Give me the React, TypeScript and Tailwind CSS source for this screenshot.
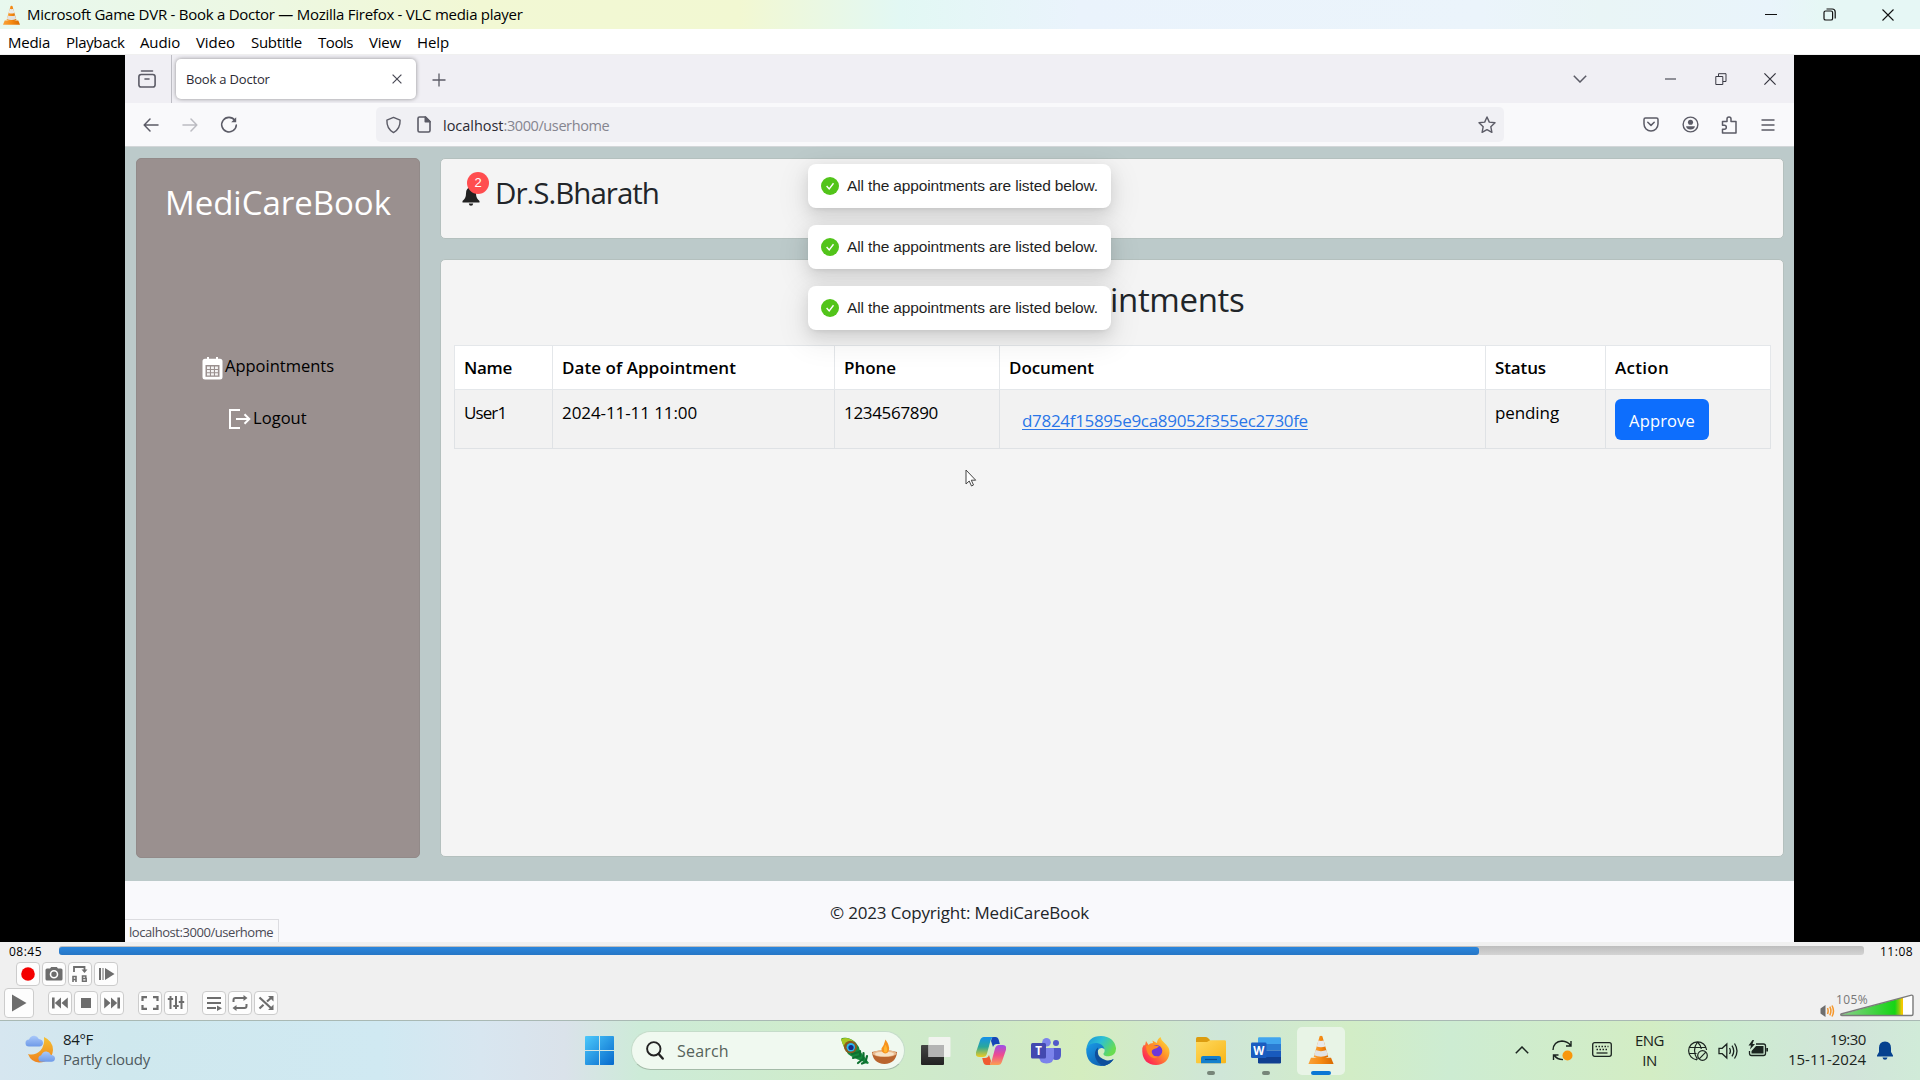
import type { ReactNode } from "react";

function Cone({ className }: { className: string }) {
  return (
    <svg viewBox="0 0 26 30" className={className}>
      <defs>
        <linearGradient id="cone" x1="0" x2="1">
          <stop offset="0" stopColor="#f9a23a" />
          <stop offset="0.5" stopColor="#f58a12" />
          <stop offset="1" stopColor="#d96a00" />
        </linearGradient>
      </defs>
      <path d="M2.6 23.5h20.8L26 30H0z" fill="url(#cone)" />
      <path d="M11.6 1.2Q13 .2 14.4 1.2L20.5 22.6Q13 26.5 5.5 22.6z" fill="url(#cone)" />
      <path d="M10.3 5.6q2.7 1 5.4 0l1.8 6.2q-4.5 1.6-9 0z" fill="#e9e9e9" />
      <path d="M7.4 15.6q5.6 2.2 11.2 0l1.5 5.4q-7.1 3-14.2 0z" fill="#e2e2e2" />
    </svg>
  );
}

function TitleBar() {
  return (
    <div className="flex h-[29px] shrink-0 items-center bg-[linear-gradient(90deg,#e8f8ee_0px,#ecf8e4_240px,#f2f8d4_480px,#f2f8d2_740px,#e2f8f4_900px,#eaf3fc_1080px,#ebf4fb_1480px,#e9f5f6_1600px,#e9f4fb_1770px,#e6f7f5_1820px)] pr-[26px] pl-[3px]">
      <Cone className="h-[20px] w-[17px]" />
      <span className="ml-[7px] text-[15px] leading-[29px] tracking-[-0.26px] text-black">
        Microsoft Game DVR - Book a Doctor — Mozilla Firefox - VLC media player
      </span>
      <div className="ml-auto flex items-center gap-[46px]">
        <svg viewBox="0 0 12 12" className="h-3 w-3"><path d="M0 5.5h12" stroke="#111" /></svg>
        <svg viewBox="0 0 13 13" className="h-[13px] w-[13px]" fill="none" stroke="#111" strokeWidth="1.2">
          <rect x="1" y="3" width="8.6" height="9" rx="1.6" />
          <path d="M3.5 1h5.7a3 3 0 0 1 3 3v6.5" />
        </svg>
        <svg viewBox="0 0 12 12" className="h-3 w-3"><path d="M.5 .5l11 11M11.500 .5l-11 11" stroke="#111" strokeWidth="1.1" /></svg>
      </div>
    </div>
  );
}

const menus: [string, string][] = [
  ["Media", "w-[58px] tracking-[-0.24px]"],
  ["Playback", "w-[74px] tracking-[-0.34px]"],
  ["Audio", "w-[56px] tracking-[-0.13px]"],
  ["Video", "w-[55px] tracking-[-0.07px]"],
  ["Subtitle", "w-[67px] tracking-[-0.29px]"],
  ["Tools", "w-[51px] tracking-[-0.45px]"],
  ["View", "w-[48px] tracking-[-0.19px]"],
  ["Help", "w-[48px] tracking-[-0.11px]"],
];

function MenuBar() {
  return (
    <div className="flex h-[26px] shrink-0 border-b border-[#f0f0f0] bg-white pl-[8px] text-[15px] leading-[27px] text-black">
      {menus.map(([t, c]) => (
        <span key={t} className={c}>{t}</span>
      ))}
    </div>
  );
}

function TabStrip() {
  return (
    <div className="flex h-[48px] shrink-0 items-center bg-[#f0eff4] text-[#5b5b66]">
      <div className="flex h-full w-[47px] items-center justify-center border-r border-[#bdbdc4] pr-[2px]">
        <svg viewBox="0 0 18 18" className="h-[18px] w-[18px]" fill="none" stroke="#5b5b66" strokeWidth="1.6" strokeLinecap="round">
          <path d="M3.500 1h11" />
          <rect x=".9" y="4.5" width="16.200" height="12.500" rx="2.300" />
          <path d="M7 9h4" />
        </svg>
      </div>
      <div className="ml-[4px] flex h-[40px] w-[240px] items-center rounded-[5px] bg-white pr-[14px] pl-[10px] shadow-[0_0_4px_rgba(0,0,0,0.4)]">
        <span className="pt-[2px] text-[13px] tracking-[-0.18px] text-[#2b2a33]">Book a Doctor</span>
        <svg viewBox="0 0 10 10" className="ml-auto h-[10px] w-[10px]"><path d="M.6 .6l8.800 8.800M9.400 .6L.6 9.400" stroke="#4a4a55" strokeWidth="1.2" /></svg>
      </div>
      <svg viewBox="0 0 14 14" className="mt-[2px] ml-[16px] h-[14px] w-[14px]"><path d="M7 .5v13M.5 7h13" stroke="#5b5b66" strokeWidth="1.3" /></svg>
      <div className="ml-auto flex items-center pr-[18px]">
        <svg viewBox="0 0 14 8" className="mr-[78px] h-2 w-[14px]" fill="none"><path d="M.8 .8L7 7l6.200-6.200" stroke="#5b5b66" strokeWidth="1.500" /></svg>
        <svg viewBox="0 0 11 11" className="mr-[39px] h-[11px] w-[11px]"><path d="M0 5h11" stroke="#777780" strokeWidth="1.600" /></svg>
        <svg viewBox="0 0 12 12" className="mr-[37px] h-3 w-3" fill="none" stroke="#3a3a44"><path d="M.8 3.500h7v8h-7zM3.500 3.500V.700h7.500v7.800H8" /></svg>
        <svg viewBox="0 0 12 12" className="h-3 w-3"><path d="M.4 .4l11.200 11.200M11.600 .4L.4 11.600" stroke="#33333d" strokeWidth="1.200" /></svg>
      </div>
    </div>
  );
}

function NavBar() {
  return (
    <div className="flex h-[43px] shrink-0 items-center bg-[#f9f9fb] pr-[19px]">
      <svg viewBox="0 0 16 14" className="ml-[18px] h-[14px] w-[16px]" fill="none" stroke="#5b5b66" strokeWidth="1.500" strokeLinecap="round" strokeLinejoin="round"><path d="M15 7H1.500M7 1L1.200 7 7 13" /></svg>
      <svg viewBox="0 0 16 14" className="ml-[23px] h-[14px] w-[16px]" fill="none" stroke="#bcbcc2" strokeWidth="1.500" strokeLinecap="round" strokeLinejoin="round"><path d="M1 7h13.500M9 1l5.800 6L9 13" /></svg>
      <svg viewBox="0 0 18 18" className="ml-[22px] h-[18px] w-[18px]" fill="none" stroke="#5b5b66" strokeWidth="1.600" strokeLinecap="round"><path d="M14.800 4.200A7.300 7.300 0 1 0 16.300 9" /><path d="M16.200 1.300v5h-5z" fill="#5b5b66" stroke="none" /></svg>
      <div className="ml-[138px] flex h-[35px] w-[1128px] items-center rounded-[5px] bg-[#f0f0f4] pr-[8px] pl-[9px]">
        <svg viewBox="0 0 18 18" className="h-[18px] w-[17px]" fill="none" stroke="#5b5b66" strokeWidth="1.500" strokeLinejoin="round"><path d="M9 1l7 2.800C16.200 9.500 14 14.500 9 17 4 14.500 1.800 9.500 2 3.800z" /></svg>
        <svg viewBox="0 0 14 17" className="ml-[15px] h-[17px] w-[14px]" fill="none" stroke="#5b5b66" strokeWidth="1.600" strokeLinejoin="round"><path d="M2.500 1H8.500L13 5.500V14.500Q13 16 11.500 16H2.500Q1 16 1 14.500V2.500Q1 1 2.500 1z" /><path d="M8.300 1v4.800H13z" fill="#5b5b66" /></svg>
        <span className="ml-[12px] pt-[2px] text-[14.500px] tracking-[-0.03px] text-[#2b2a33]">localhost</span>
        <span className="pt-[2px] text-[14.500px] tracking-[-0.400px] text-[#85858f]">:3000/userhome</span>
        <svg viewBox="0 0 18 18" className="ml-auto h-[18px] w-[18px]" fill="none" stroke="#5b5b66" strokeWidth="1.400" strokeLinejoin="round"><path d="M9 1l2.300 5.100 5.700.7-4.200 3.900 1.100 5.600L9 13.600l-4.900 2.700 1.100-5.600L1 6.800l5.700-.7z" /></svg>
      </div>
      <div className="ml-auto flex items-center text-[#5b5b66]">
        <svg viewBox="0 0 16 15" className="mr-[23px] h-[15px] w-[16px]" fill="none" stroke="currentColor" strokeWidth="1.500" strokeLinecap="round" strokeLinejoin="round"><path d="M2.500 1h11Q15 1 15 2.500V7A7 7 0 0 1 1 7V2.500Q1 1 2.500 1zM4.800 5.300L8 8.400l3.200-3.100" /></svg>
        <svg viewBox="0 0 18 18" className="mr-[22px] h-[17px] w-[17px]"><circle cx="9" cy="9" r="7.800" fill="none" stroke="currentColor" strokeWidth="1.500" /><circle cx="9" cy="6.600" r="2.700" fill="currentColor" /><path d="M4.300 10.800h9.400Q13 14.200 9 14.200T4.300 10.800z" fill="currentColor" /></svg>
        <svg viewBox="0 0 16 18" className="mr-[24px] h-[18px] w-[16px]" fill="none" stroke="currentColor" strokeWidth="1.500" strokeLinejoin="round"><path d="M1.500 5.500H6V3a2 2 0 0 1 4 0v2.500h5V17H1.500V13.200H3.300a2 2 0 0 0 0-4H1.500z" /></svg>
        <svg viewBox="0 0 14 12" className="h-3 w-[14px]" stroke="currentColor" strokeWidth="1.400"><path d="M.5 1h13M.5 6h13M.5 11h13" /></svg>
      </div>
    </div>
  );
}

function Sidebar() {
  return (
    <aside className="flex w-[284px] shrink-0 flex-col rounded-[5px] border border-[#928a89] bg-[#9a908f] text-[16.500px] leading-[24px] text-black">
      <h1 className="mt-[20px] ml-[28px] text-[33px] leading-[48px] tracking-[-0.020px] text-white">MediCareBook</h1>
      <div className="mt-[127px] ml-[65px] flex h-[24px] items-center">
        <svg viewBox="0 0 21 23" className="mt-[4px] h-[23px] w-[21px]">
          <path d="M3 1.800h2V0h2v1.800h7V0h2v1.800h2q2.500 0 2.500 2.500V20q0 2.500-2.500 2.500H3Q.5 22.500 .5 20V4.300q0-2.500 2.500-2.500z" fill="#fff" />
          <path d="M3.500 8h14v11.800h-14z" fill="#9a908f" />
          <path d="M5 9.600h2.900v2.300H5zM9 9.600h2.900v2.300H9zM13 9.600h2.900v2.300H13zM5 12.900h2.900v2.300H5zM9 12.900h2.900v2.300H9zM13 12.900h2.900v2.300H13zM5 16.200h2.900v2.300H5zM9 16.200h2.900v2.300H9zM13 16.200h2.900v2.300H13z" fill="#fff" opacity=".9" />
        </svg>
        <span className="ml-[2px]">Appointments</span>
      </div>
      <div className="mt-[28px] ml-[92px] flex h-[24px] items-center">
        <svg viewBox="0 0 22 20" className="mt-[2px] h-5 w-[22px]" fill="none" stroke="#fff" strokeWidth="2"><path d="M11 1H1v18h10M7 10h13M15.500 5.200L20.300 10l-4.800 4.800" /></svg>
        <span className="ml-[2px] tracking-[0.05px]">Logout</span>
      </div>
    </aside>
  );
}

const columns: [string, string][] = [
  ["Name", "w-[98px] tracking-[-0.3px]"],
  ["Date of Appointment", "w-[282px] tracking-[0.06px]"],
  ["Phone", "w-[165px] tracking-[-0.04px]"],
  ["Document", "w-[486px] tracking-[-0.08px]"],
  ["Status", "w-[120px] tracking-[-0.12px]"],
  ["Action", "w-[165px] tracking-[0.28px]"],
];

function Cell({ children, className }: { children: ReactNode; className: string }) {
  return <td className={`border border-[#dfe2e5] p-0 pl-[9px] align-top ${className}`}>{children}</td>;
}

function Appointments() {
  return (
    <section className="mt-[20px] flex h-[598px] flex-col rounded-[5px] border border-[#b4c0be] bg-[#f4f4f4] px-[13px] pt-[16px]">
      <h2 className="pl-[6px] text-center text-[33px] leading-[48px] tracking-[-0.350px] text-[#212529]">All Appointments</h2>
      <table className="mt-[21px] w-[1316px] table-fixed border-collapse text-[17px] leading-[24px] text-black">
        <thead>
          <tr className="h-[44px] bg-white text-left">
            {columns.map(([t, c]) => (
              <th key={t} className={`border border-[#e4e7ea] p-0 pl-[9px] font-semibold ${c}`}>{t}</th>
            ))}
          </tr>
        </thead>
        <tbody>
          <tr className="h-[59px] bg-[#f2f2f2]">
            <Cell className="pt-[11px] tracking-[-0.900px]">User1</Cell>
            <Cell className="pt-[11px] tracking-[-0.090px]">2024-11-11 11:00</Cell>
            <Cell className="pt-[11px] tracking-[-0.320px]">1234567890</Cell>
            <Cell className="pt-[19px]">
              <span className="ml-[13px] tracking-[-0.310px] text-[#2a76e8] underline decoration-1 underline-offset-[2px]">d7824f15895e9ca89052f355ec2730fe</span>
            </Cell>
            <Cell className="pt-[11px] tracking-[-0.100px]">pending</Cell>
            <Cell className="pt-[9px]">
              <button className="h-[41px] w-[94px] rounded-[6px] bg-[#0d6efd] pt-px text-[16.500px] leading-[41px] tracking-[0.150px] text-white">Approve</button>
            </Cell>
          </tr>
        </tbody>
      </table>
    </section>
  );
}

function Header() {
  return (
    <header className="flex h-[81px] items-start rounded-[5px] border border-[#b4c0be] bg-[#f4f4f4] pl-[21px]">
      <div className="relative mt-[27px] h-[22px] w-[19px]">
        <svg viewBox="0 0 18 20" className="h-5 w-[18px]"><path d="M9 1Q14 1.500 14 7.500 14 12.500 17.500 15v1.500H.5V15Q4 12.500 4 7.500 4 1.500 9 1zM6.800 17.600h4.400Q11 19.800 9 19.800T6.800 17.600z" fill="#212121" /></svg>
        <span className="absolute -top-[14px] left-[5px] h-[22px] w-[22px] rounded-full bg-[#ff4d4f] text-center font-['Liberation_Sans'] text-[13px] leading-[22px] text-white">2</span>
      </div>
      <span className="mt-[11px] ml-[14px] text-[29.500px] leading-[46px] tracking-[-0.980px] text-[#212529]">Dr.S.Bharath</span>
    </header>
  );
}

function Toast() {
  return (
    <div className="flex h-[44px] w-[303px] items-center rounded-[8px] bg-white pl-[13px] shadow-[0_6px_16px_rgba(0,0,0,0.1),0_3px_6px_-4px_rgba(0,0,0,0.14),0_9px_28px_8px_rgba(0,0,0,0.06)]">
      <svg viewBox="0 0 18 18" className="h-[18px] w-[18px]"><circle cx="9" cy="9" r="9" fill="#52c41a" /><path d="M5.600 9l2.600 2.900 4.300-5.600" fill="none" stroke="#fff" strokeWidth="1.400" /></svg>
      <span className="ml-[8px] font-['Liberation_Sans'] text-[15.500px] tracking-[-0.130px] whitespace-nowrap text-[#1f1f1f]">All the appointments are listed below.</span>
    </div>
  );
}

function Page() {
  return (
    <div className="relative flex h-[796px] flex-col border-t border-[#d2d6d8] bg-[#bccaca]">
      <div className="flex h-[734px] pt-[11px] pb-[23px] pl-[11px]">
        <Sidebar />
        <main className="ml-[20px] w-[1344px]">
          <Header />
          <Appointments />
        </main>
      </div>
      <footer className="flex h-[61px] items-center justify-center bg-[#f9f9fc] pt-[2px] text-[17px] tracking-[-0.170px] text-[#212529]">
        © 2023 Copyright: MediCareBook
      </footer>
      <div className="absolute top-[17px] left-[683px] flex flex-col gap-[17px]">
        <Toast />
        <Toast />
        <Toast />
      </div>
      <svg viewBox="0 0 12 18" className="absolute top-[322px] left-[840px] h-[18px] w-3"><path d="M1 1v14l3.200-3 2.300 5 2-1-2.200-4.800h4.400z" fill="#fff" stroke="#444" /></svg>
      <div className="absolute bottom-0 left-0 h-[23px] w-[154px] border-t border-r border-[#dcdce0] bg-[#f9f9fb] pl-[4px] text-[13px] leading-[24px] tracking-[-0.440px] text-[#4a4a55]">
        localhost:3000/userhome
      </div>
    </div>
  );
}

function CtlButton({ children, className }: { children: ReactNode; className: string }) {
  return (
    <div className={`flex h-6 w-6 items-center justify-center rounded-[4px] border border-[#cccccc] bg-[#fdfdfd] ${className}`}>
      <svg viewBox="0 0 18 18" className="h-[18px] w-[18px] shrink-0" fill="#6d6d6d">{children}</svg>
    </div>
  );
}

function Controls() {
  return (
    <div className="flex h-[78px] shrink-0 flex-col bg-[#f0f0f0]">
      <div className="flex h-[20px] items-start pt-[4px] pl-[9px] text-[12px] text-black">
        <span className="-mt-[3px] w-[50px] leading-[18px] tracking-[0.480px]">08:45</span>
        <div className="h-[9px] w-[1805px] rounded-[3px] bg-[linear-gradient(#bdbdbd,#d4d4d4)] pt-px">
          <div className="h-[8px] w-[1420px] rounded-[3px] bg-[linear-gradient(#2a86dc,#2676c6)]" />
        </div>
        <span className="-mt-[3px] ml-[16px] leading-[18px] tracking-[0.500px]">11:08</span>
      </div>
      <div className="flex h-[24px] gap-[2px] pl-[16px]">
        <CtlButton className=""><circle cx="9" cy="9" r="6.800" fill="#f40000" /></CtlButton>
        <CtlButton className="">
          <path d="M.5 5q0-1.500 1.500-1.500h3L6.200 2h5.600L13 3.500h3q1.500 0 1.500 1.500v9q0 1.500-1.500 1.500H2Q.5 15.500 .5 14z" />
          <circle cx="9" cy="9.300" r="3.500" fill="none" stroke="#fff" strokeWidth="1.600" />
        </CtlButton>
        <CtlButton className="">
          <path d="M3 7V2h10.500v3" fill="none" stroke="#6d6d6d" strokeWidth="1.800" />
          <path d="M10.500 4.500h6l-3 3.500z" />
          <path d="M2 17v-5.500h3V17M2 14.500h3" fill="none" stroke="#6d6d6d" strokeWidth="1.600" />
          <path d="M11.500 11h3.300v2.600h-3.300v2.600h3.700v-2.600h-3.700zV16" fill="none" stroke="#6d6d6d" strokeWidth="1.500" />
        </CtlButton>
        <CtlButton className=""><path d="M2 3h2v12H2zM5.500 3h1v12h-1zM8 3l9.500 6L8 15z" /></CtlButton>
      </div>
      <div className="flex h-[34px] items-center pl-[4px]">
        <div className="flex h-[30px] w-[30px] items-center justify-center rounded-[4px] border border-[#cccccc] bg-[#fdfdfd]">
          <svg viewBox="0 0 16 18" className="h-[18px] w-4" fill="#6d6d6d"><path d="M1 .5L15.500 9 1 17.500z" /></svg>
        </div>
        <CtlButton className="ml-[14px]"><path d="M1 3.500h2.600v11H1zM10 3.500v11L3.800 9zM16.800 3.500v11L10.500 9z" /></CtlButton>
        <CtlButton className="ml-[2px]"><path d="M4 4h10v10H4z" /></CtlButton>
        <CtlButton className="ml-[2px]"><path d="M14.400 3.500H17v11h-2.600zM8 3.500v11L14.200 9zM1.200 3.500v11L7.500 9z" /></CtlButton>
        <CtlButton className="ml-[14px]"><path d="M6 3.200H1.500V7M12 3.200h4.500V7M6 14.800H1.500V11M12 14.800h4.500V11" fill="none" stroke="#6d6d6d" strokeWidth="2.200" /></CtlButton>
        <CtlButton className="ml-[2px]">
          <path d="M3.500 2v13M9 2v13M14.500 2v13" stroke="#6d6d6d" strokeWidth="2" />
          <path d="M.8 5h5.400M6.300 12h5.400M11.800 8h5.400" stroke="#6d6d6d" strokeWidth="2.200" />
        </CtlButton>
        <CtlButton className="ml-[14px]"><path d="M2 3h14v2H2zM2 8h14v2H2zM2 13h9v2H2zM12 11.500l5 2.800-5 2.800z" /></CtlButton>
        <CtlButton className="ml-[2px]">
          <path d="M2.500 8V6q0-2 2-2H13M15.500 10v2q0 2-2 2H5" fill="none" stroke="#6d6d6d" strokeWidth="2" />
          <path d="M12.500 1l4 3-4 3zM5.500 11l-4 3 4 3z" />
        </CtlButton>
        <CtlButton className="ml-[2px]">
          <path d="M2.500 3.500l12 11M2.500 14.500l4-3.700M10 7.500l4.500-4" fill="none" stroke="#6d6d6d" strokeWidth="2.200" />
          <path d="M11 2h5.500v5.500zM11 16h5.500v-5.500z" />
        </CtlButton>
        <div className="relative ml-auto mr-[6px] flex items-end pt-[4px]">
          <svg viewBox="0 0 15 14" className="mr-[5px] -mb-px h-[14px] w-[15px]">
            <path d="M.5 4.500L5.500 1v12L.5 9.500z" fill="#6d6d6d" />
            <path d="M7.500 4q1.300 3 0 6M9.800 2.700q2.200 4.300 0 8.600M12 1.500q3 5.500 0 11" fill="none" stroke="#f5962a" strokeWidth="1.500" />
          </svg>
          <svg viewBox="0 0 74 23" className="h-[23px] w-[74px]">
            <defs>
              <linearGradient id="vol" x1="0" x2="1">
                <stop offset="0" stopColor="#8ccf8c" />
                <stop offset=".87" stopColor="#15d515" />
                <stop offset=".94" stopColor="#8ccc10" />
                <stop offset=".98" stopColor="#f5c800" />
              </linearGradient>
            </defs>
            <path d="M1 20.500L72.500 1v20.500H2Q.5 21.500 1 20.500z" fill="#fff" />
            <path d="M1 20.500L63 3.600V21.500H1z" fill="url(#vol)" />
            <path d="M1 20L71.500 1.100Q73 1 73 2.500V20q0 1.500-1.500 1.500H2Q.2 21.500 1 20z" fill="none" stroke="#7b7b7b" strokeWidth="1.400" />
          </svg>
          <span className="absolute top-[1px] left-[16px] text-[12px] leading-[18px] tracking-[0.370px] text-[#777]">105%</span>
        </div>
      </div>
    </div>
  );
}

function AppSlot({ children, className = "" }: { children: ReactNode; className?: string }) {
  return <div className={`relative flex h-12 w-12 items-center justify-center rounded-[5px] ${className}`}>{children}</div>;
}

function Taskbar() {
  return (
    <div className="flex h-[60px] items-center border-t border-[#a9b9b4] bg-[linear-gradient(90deg,#d6e6f0_0px,#cfe8ee_120px,#d0e9f2_380px,#d8e6f0_480px,#dae2ea_565px,#cdebd8_640px,#cfecc8_860px,#cfe9cc_960px,#d4edbf_1080px,#cfe6d8_1220px,#d2edc6_1350px,#cdecd2_1450px,#d3edc4_1650px,#cdecd0_1730px,#d2e4da_1850px,#d0ebd8_1920px)]">
      <div className="flex w-[575px] items-center pb-[4px] pl-[25px]">
        <svg viewBox="0 0 30 28" className="h-[28px] w-[30px]">
          <defs>
            <linearGradient id="moon" x1="0" y1="0" x2="0" y2="1"><stop offset="0" stopColor="#f6c030" /><stop offset="1" stopColor="#ee8420" /></linearGradient>
            <linearGradient id="cloud" x1="0" y1="0" x2="0" y2="1"><stop offset="0" stopColor="#a9c8fa" /><stop offset="1" stopColor="#6e9ae8" /></linearGradient>
          </defs>
          <path d="M19 2Q28 6 28 15 27 27 14 27.500 6 27 3 19 10 21 15.500 15.500 20 10 19 2z" fill="url(#moon)" />
          <path d="M4 11.500a3.500 3.500 0 0 1 0-7Q6 .3 9.500 .8q3 .2 4.300 3.200Q18 4.500 18 8q-.3 3.300-3.500 3.500z" fill="url(#cloud)" />
          <path d="M16 26.800a3.200 3.200 0 0 1 0-6.300q2-4.500 5.500-4 3.200.3 4.200 3.200 4.300.6 4.300 3.800-.3 3.200-3.500 3.300z" fill="url(#cloud)" />
        </svg>
        <div className="ml-[8px] flex flex-col text-[15px] leading-[20px]">
          <span className="tracking-[-0.330px] text-[#16211f]">84°F</span>
          <span className="tracking-[-0.220px] text-[#4f5b5f]">Partly cloudy</span>
        </div>
      </div>
      <AppSlot>
        <svg viewBox="0 0 29 29" className="h-[29px] w-[29px]">
          <defs><linearGradient id="win" x1="0" y1="0" x2="1" y2="1"><stop offset="0" stopColor="#4cc9fb" /><stop offset="1" stopColor="#0669cc" /></linearGradient></defs>
          <path d="M1 0h13v14H0V1Q0 0 1 0zM15 0h13q1 0 1 1v13H15zM0 15h14v14H1q-1 0-1-1zM15 15h14v13q0 1-1 1H15z" fill="url(#win)" />
        </svg>
      </AppSlot>
      <div className="ml-[8px] flex h-[39px] w-[274px] items-center rounded-full border border-b-[#a4bba8] border-[#c5dcca] bg-[#f0f9f0] pr-[6px] pl-[14px]">
        <svg viewBox="0 0 18 19" className="h-[19px] w-[18px]" fill="none" stroke="#222" strokeWidth="1.900" strokeLinecap="round"><circle cx="7.800" cy="7.800" r="6.700" /><path d="M12.700 13l4 4.500" strokeWidth="2.400" /></svg>
        <span className="ml-[13px] text-[16px] tracking-[0.200px] text-[#56625a]">Search</span>
        <svg viewBox="0 0 58 28" className="ml-auto h-[28px] w-[58px]">
          <path d="M1 2Q2 .3 6 .8 13 2 16 6 19 9 20 14L29 26l-1.500 1Q24 26 22 24 13 21 8 17 3 10 1 2z" fill="#168a3c" />
          <path d="M1 2Q8 -1 14 4.500L8 15Q3 10 1 2z" fill="#a8c820" />
          <path d="M20 14v5M23.500 16v5M27 19l-1 4M20 19l-7 2M23 22l-5 4M26 25l-4 1.500M19 15l-7 2" stroke="#0d7030" strokeWidth="2.200" strokeLinecap="round" />
          <ellipse cx="10.500" cy="10" rx="6.500" ry="6.200" fill="#8a5a1e" />
          <circle cx="10.800" cy="10.200" r="4.200" fill="#28b8f0" />
          <circle cx="11" cy="10.500" r="2.600" fill="#122a88" />
          <path d="M32 15Q45 11.500 57 15 56 26.500 44.500 27 33 26.500 32 15z" fill="#b9652f" />
          <ellipse cx="44.500" cy="16.500" rx="12" ry="3.500" fill="#e8b98c" />
          <ellipse cx="44.500" cy="17" rx="9.500" ry="2.300" fill="#f6e3c8" />
          <path d="M45.500 2.500Q50 9 49 13 48 16.500 45 16.500 41 15.500 41.500 11.500 44 8.500 45.500 2.500z" fill="#f7931e" />
          <path d="M45.300 7.500q2.600 4 1.700 7-1.500 2-3 0-.8-3 1.300-7z" fill="#ffb52e" />
        </svg>
      </div>
      <div className="ml-[7px] flex gap-[7px]">
        <AppSlot>
          <svg viewBox="0 0 30 28" className="h-[28px] w-[30px]">
            <defs><linearGradient id="dark" x1="0" y1="0" x2="0" y2="1"><stop offset="0" stopColor="#444" /><stop offset="1" stopColor="#222" /></linearGradient></defs>
            <rect x="0" y="8" width="23" height="20" rx="1" fill="url(#dark)" />
            <path d="M8.500 0h20q1 0 1 1v18q0 1-1 1H7.500V1q0-1 1-1z" fill="#f3f3f1" opacity=".93" />
            <path d="M7.500 8H23v12H7.500z" fill="#b4b4b4" />
          </svg>
        </AppSlot>
        <AppSlot>
          <svg viewBox="0 0 30 28" className="h-[28px] w-[30px]">
            <defs>
              <linearGradient id="cpA" x1="0" y1="0" x2="0" y2="1"><stop offset="0" stopColor="#1490ea" /><stop offset=".5" stopColor="#2ba89a" /><stop offset="1" stopColor="#f0cc20" /></linearGradient>
              <linearGradient id="cpB" x1="0" y1="0" x2="0" y2="1"><stop offset="0" stopColor="#9b50e8" /><stop offset=".5" stopColor="#ee4c90" /><stop offset="1" stopColor="#fba050" /></linearGradient>
            </defs>
            <path d="M16 0h3.500Q22 0 22.800 3l1 4h-3Q18 7 17 10l-2-6z" fill="#1545b8" />
            <path d="M8 0h10q-2.500 0-3.500 3.500L11 16.500Q10 20 7 20H3Q-.8 20-.1 15.500L4 3.500Q5 0 8 0z" fill="url(#cpA)" />
            <path d="M22 28H12q2.500 0 3.500-3.500L19 11.500Q20 8 23 8h4q3.800 0 3.100 4.500L26 24.500Q25 28 22 28z" fill="url(#cpB)" />
            <path d="M14 28h-3.500Q8 28 7.200 25l-1-4h3Q12 21 13 18l2 6z" fill="#f05a30" />
          </svg>
        </AppSlot>
        <AppSlot>
          <svg viewBox="0 0 30 28" className="h-[28px] w-[30px]">
            <circle cx="25" cy="6" r="3" fill="#5059c9" />
            <path d="M21 11h8q1 0 1 1v6q0 5-5 5-4 0-4-4z" fill="#5059c9" />
            <circle cx="15.500" cy="5.200" r="4.300" fill="#7b83eb" />
            <path d="M9 11h13q1 0 1 1v7q0 7.500-7.500 7.500T8 19v-7q0-1 1-1z" fill="#7b83eb" />
            <rect x="0" y="6" width="15" height="15.500" rx="1.500" fill="#4349b0" />
            <text x="7.500" y="18" textAnchor="middle" fontSize="11.500" fontWeight="700" fill="#fff" fontFamily="Open Sans">T</text>
          </svg>
        </AppSlot>
        <AppSlot>
          <svg viewBox="0 0 30 30" className="h-[30px] w-[30px]">
            <defs>
              <linearGradient id="eA" x1="0" y1="0" x2="1" y2=".5"><stop offset="0" stopColor="#1a8fd8" /><stop offset=".5" stopColor="#2cc0d4" /><stop offset="1" stopColor="#68dc50" /></linearGradient>
              <linearGradient id="eB" x1="0" y1="0" x2="1" y2="1"><stop offset="0" stopColor="#1a9ce8" /><stop offset="1" stopColor="#0c4ea0" /></linearGradient>
            </defs>
            <path d="M.3 13Q2 0 15 0 28 0.500 30 12 30.200 19.500 23 20.300 17 20.300 17.500 17.500 19.500 15 18 12.500 14 8 7 9 2 10 .3 13z" fill="url(#eA)" />
            <path d="M.2 13Q3 6.500 11 7 17 8 18.500 13 14 10 11.500 15 10.500 22 18 25q5 1 9.500-1.800Q23 30 15 30 0 29 .2 13z" fill="url(#eB)" />
            <path d="M12 11.500Q7.500 15 9.500 22 12 28.500 18 29.700 24.500 28.500 27.800 23 24 25 20 24.200 12 22 11.800 16z" fill="#0e4f9c" />
          </svg>
        </AppSlot>
        <AppSlot>
          <svg viewBox="0 0 28 28" className="h-[28px] w-[28px]">
            <defs>
              <linearGradient id="fx" x1="1" y1="0" x2="0" y2="1"><stop offset="0" stopColor="#fff040" /><stop offset=".4" stopColor="#ff9828" /><stop offset=".8" stopColor="#ff3050" /><stop offset="1" stopColor="#e81870" /></linearGradient>
            </defs>
            <path d="M4 4l2.500 4Q8 6 11 6L10.500 3.500Q13 5 15 6 15 2.500 18.500 0 19 3.500 22.500 6 28 10.500 27.500 16 26 27.500 14 28 1 27.500 .3 14.500 0 10 2 7.500 2 8 3 8.500z" fill="url(#fx)" />
            <circle cx="14.500" cy="13.800" r="5.800" fill="#7038d8" />
            <path d="M4 9Q8 7 12 8.500L17 9Q15 12 12 12q-3 1-2 4 1.500 4 6 3.500Q13 22.500 9 20 4.500 17 4 9z" fill="#ff8a24" />
          </svg>
        </AppSlot>
        <AppSlot>
          <svg viewBox="0 0 30 27" className="h-[27px] w-[30px]">
            <defs><linearGradient id="fo" x1="0" y1="0" x2="1" y2="1"><stop offset="0" stopColor="#ffd95e" /><stop offset="1" stopColor="#f8b618" /></linearGradient></defs>
            <path d="M0 1.500Q0 0 1.500 0h8q1.500 0 2.500 1l2 2v4H0z" fill="#dc9c10" />
            <path d="M0 5h11l3-1.800h14.500Q30 3.200 30 4.500v20.700q0 1-1 1H1q-1 0-1-1z" fill="url(#fo)" />
            <path d="M5 26.200V21q0-2 2-2h16q2 0 2 2v5.200z" fill="#1480cc" />
            <path d="M9 22.500h12" stroke="#0a4f90" strokeWidth="1.200" />
          </svg>
          <span className="absolute bottom-0 h-[4px] w-2 rounded-full bg-[#778579]" />
        </AppSlot>
        <AppSlot>
          <svg viewBox="0 0 30 27" className="h-[27px] w-[30px]">
            <path d="M7 1.500Q7 .3 8.200 .3h20.600Q30 .3 30 1.500V7H7z" fill="#41a5ee" />
            <path d="M7 7h23v6.500H7z" fill="#2b7cd3" />
            <path d="M7 13.500h23V20H7z" fill="#185abd" />
            <path d="M7 20h23v5.300q0 1.200-1.200 1.200H8.200Q7 26.500 7 25.300z" fill="#103f91" />
            <rect x="0" y="5.500" width="15.500" height="15.500" rx="1.300" fill="#1a5cc0" />
            <text x="7.700" y="17.500" textAnchor="middle" fontSize="11.500" fontWeight="700" fill="#fff" fontFamily="Open Sans">W</text>
          </svg>
          <span className="absolute bottom-0 h-[4px] w-2 rounded-full bg-[#778579]" />
        </AppSlot>
        <AppSlot className="bg-[#e8f4e6]">
          <Cone className="-mt-[2px] h-[29px] w-[26px]" />
          <span className="absolute bottom-0 h-[4px] w-5 rounded-full bg-[#0a78d4]" />
        </AppSlot>
      </div>
      <div className="ml-auto flex items-center pr-[27px] text-[#1b2420]">
        <svg viewBox="0 0 14 8" className="-mt-[2px] mr-[23px] h-2 w-[14px]" fill="none" stroke="#1b2420" strokeWidth="1.500"><path d="M.8 7.200L7 1l6.200 6.200" /></svg>
        <svg viewBox="0 0 21 21" className="mr-[19px] h-[21px] w-[21px]" fill="none" stroke="#1b2420" strokeWidth="1.400">
          <path d="M1 10Q1.500 1.500 10 1q6 .3 8.800 4.800M19 1v5h-5M11 19.600Q5 19.600 2 15M1.500 20v-5h5" />
          <circle cx="15.500" cy="15.500" r="5" fill="#f8960c" stroke="none" />
        </svg>
        <svg viewBox="0 0 20 15" className="-mt-[2px] mr-[23px] h-[15px] w-5" fill="none" stroke="#1b2420" strokeWidth="1.300">
          <rect x=".7" y=".7" width="18.600" height="13.600" rx="2" />
          <path d="M3.500 4.500h13M4.500 7.500h12" strokeDasharray="1.500 1.500" />
          <path d="M4.500 11h11" />
        </svg>
        <div className="mr-[24px] flex w-[29px] flex-col items-center pb-[2px] text-[15px] leading-[20px] tracking-[-0.500px]">
          <span>ENG</span>
          <span>IN</span>
        </div>
        <svg viewBox="0 0 20 20" className="mr-[10px] h-5 w-5" fill="none" stroke="#1b2420" strokeWidth="1.200">
          <path d="M9 18.800A9 9 0 1 1 18.600 9M1.500 6.500h16M1.200 12.500H8.500M9.500 18.500Q3.500 9 9.500 1M9.500 1q3.600 3.500 3.800 7" />
          <circle cx="14.500" cy="14.500" r="4.800" /><path d="M11.200 17.800l6.600-6.600" />
        </svg>
        <svg viewBox="0 0 20 18" className="mr-[10px] h-[18px] w-5" fill="none" stroke="#1b2420" strokeWidth="1.300">
          <path d="M1 6.300h3.200L8.800 2v14l-4.600-4.300H1zM11.500 6q1.800 3 0 6M14 3.700q3.500 5.300 0 10.600M16.500 1.500q5 7.500 0 15" />
        </svg>
        <svg viewBox="0 0 20 17" className="mr-[20px] -mt-[4px] h-[17px] w-5">
          <path d="M8 4h7.500Q17.500 4 17.500 6v7.500q0 2-2 2h-12q-2 0-2-2V11" fill="none" stroke="#1b2420" strokeWidth="1.300" />
          <path d="M8 6h7.500v7.500h-12V11zM18.300 8H20v3.500h-1.700zM4.500 0L.5 5.500H3L2 9.500l5-5.500H4.500L6 0z" fill="#1b2420" />
        </svg>
        <div className="flex w-[78px] flex-col items-end pb-[4px] text-[15px] leading-[20px]">
          <span className="tracking-[-0.450px]">19:30</span>
          <span className="tracking-[-0.030px]">15-11-2024</span>
        </div>
        <svg viewBox="0 0 16 19" className="ml-[11px] h-[19px] w-4"><path d="M8 .5q6 .3 6 6.500V11l2 3.500V15.500H0V14.500L2 11V7Q2 .8 8 .5zM5.500 16.500h5q-.5 2.300-2.500 2.300t-2.500-2.300z" fill="#06428f" /></svg>
      </div>
    </div>
  );
}

export default function App() {
  return (
    <div className="flex h-[1080px] w-[1920px] flex-col overflow-hidden bg-[#f0f0f0] font-['Open_Sans',sans-serif]">
      <TitleBar />
      <MenuBar />
      <div className="flex h-[887px] shrink-0 bg-black pr-[126px] pl-[125px]">
        <div className="flex w-[1669px] flex-col">
          <TabStrip />
          <NavBar />
          <Page />
        </div>
      </div>
      <Controls />
      <Taskbar />
    </div>
  );
}
